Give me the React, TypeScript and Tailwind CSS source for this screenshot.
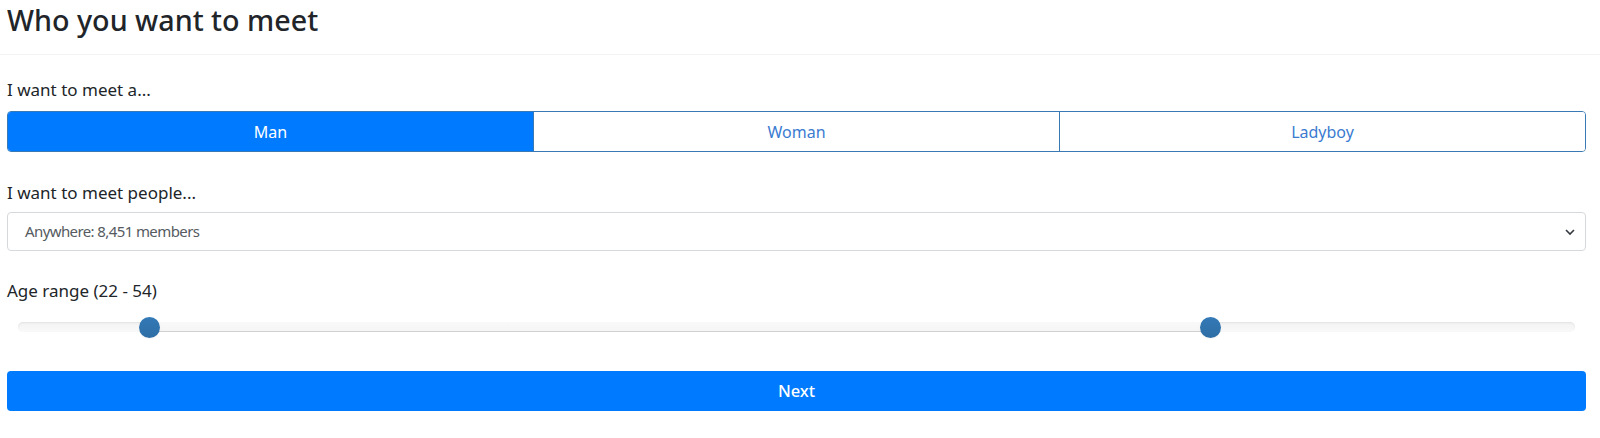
import React from "react";

export default function App() {
  const font = { fontFamily: '"Noto Sans", "Open Sans", sans-serif' };
  return (
    <div className="w-[1600px] h-[438px] bg-white text-[#212529] overflow-hidden" style={font}>
      <div className="border-b border-[#f2f2f2] pl-[7px] pt-[3px] h-[55px]">
        <h3 className="text-[28.7px] leading-[34px] font-medium">Who you want to meet</h3>
      </div>
      <div className="pl-[7px] pr-[14px]">
        <div className="pt-[23px]">
          <label className="block text-[17px] leading-[24px] mb-[9px]">I want to meet a...</label>
          <div className="flex h-[41px] rounded-[4px] overflow-hidden border border-[#3a7ab4] text-[16px]">
            <button className="flex-1 bg-[#007bff] text-white border-r border-[#3a7ab4]">Man</button>
            <button className="flex-1 bg-white text-[#3a7bd0] border-r border-[#3a7ab4]">Woman</button>
            <button className="flex-1 bg-white text-[#3a7bd0]">Ladyboy</button>
          </div>
        </div>
        <div className="pt-[29px]">
          <label className="block text-[17px] leading-[24px] mb-[7px]">I want to meet people...</label>
          <div className="flex items-center justify-between h-[39px] rounded-[4px] border border-[#d6d9dc] pl-[17px] pr-[10px] text-[15px] tracking-[-0.6px] text-[#555b61]">
            <span>Anywhere: 8,451 members</span>
            <svg width="10" height="8" viewBox="0 0 10 8" fill="none" stroke="#343a40" strokeWidth="1.6">
              <path d="M1 2l4 4 4-4" />
            </svg>
          </div>
        </div>
        <div className="pt-[28px]">
          <label className="block text-[17px] leading-[24px]">Age range (22 - 54)</label>
          <div className="relative h-[46px] mx-[11px]">
            <div className="absolute left-0 right-0 top-[19px] h-[10px] rounded-[5px] bg-gradient-to-b from-[#f3f3f3] to-[#f9f9f9] shadow-[inset_0_1px_2px_rgba(0,0,0,0.08)]" />
            <div className="absolute left-[131px] right-[364px] top-[19px] h-[10px] bg-gradient-to-b from-[#f9f9f9] to-[#f5f5f5] shadow-[inset_0_-1px_0_rgba(0,0,0,0.15)]" />
            <div className="absolute left-[121px] top-[14px] w-[21px] h-[21px] rounded-full bg-gradient-to-b from-[#337ab7] to-[#2e6da4] shadow-[0_1px_2px_rgba(0,0,0,0.05)]" />
            <div className="absolute right-[354px] top-[14px] w-[21px] h-[21px] rounded-full bg-gradient-to-b from-[#337ab7] to-[#2e6da4] shadow-[0_1px_2px_rgba(0,0,0,0.05)]" />
          </div>
        </div>
        <div className="pt-[22px]">
          <button className="w-full h-[40px] rounded-[4px] bg-[#007bff] text-white text-[16.5px] font-medium">Next</button>
        </div>
      </div>
    </div>
  );
}
